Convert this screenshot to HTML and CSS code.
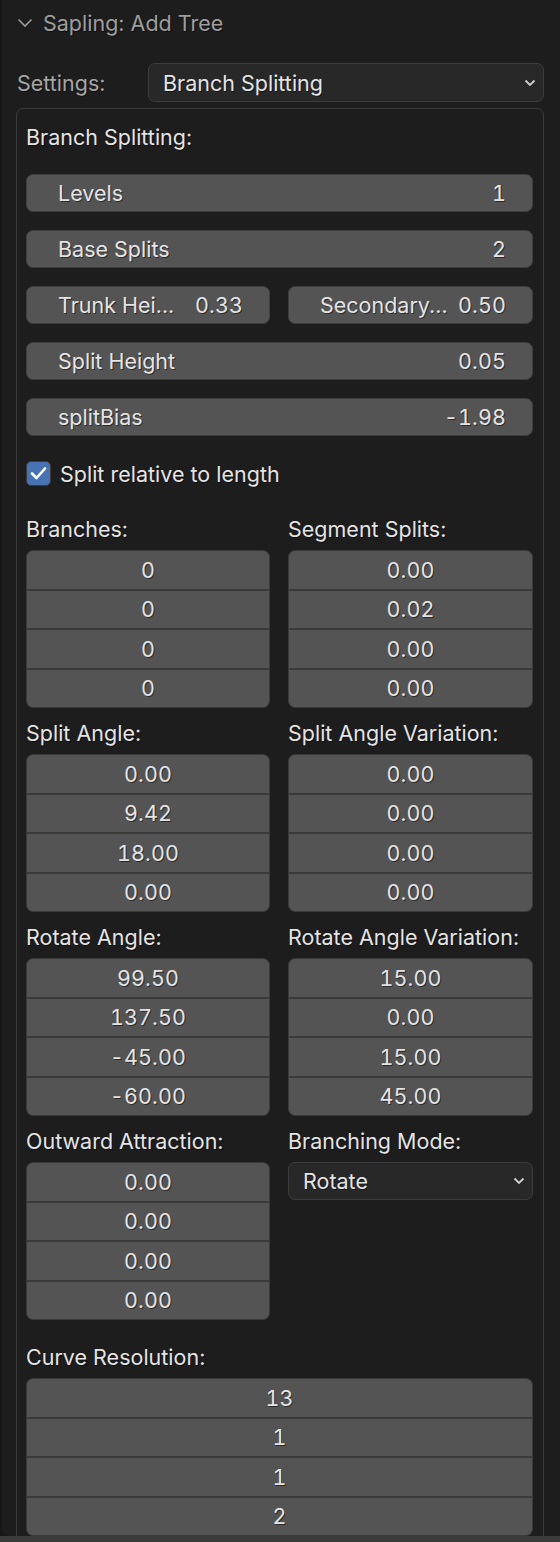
FILE: index.html
```html
<!DOCTYPE html>
<html>
<head>
<meta charset="utf-8">
<link rel="stylesheet" href="styles.css">
</head>
<body>
<div class="panel">
  <div class="header">
    <svg class="hchev" width="16" height="10" viewBox="0 0 16 10"><path d="M1.5 1.5 L8 8 L14.5 1.5" fill="none" stroke="#9a9a9a" stroke-width="1.6"/></svg>
    <span class="htitle">Sapling: Add Tree</span>
  </div>
  <div class="settings-row">
    <span class="settings-label">Settings:</span>
    <div class="dropdown wide">
      <span>Branch Splitting</span>
      <svg class="dchev" width="12" height="8" viewBox="0 0 12 8"><path d="M1.5 1.5 L6 6 L10.5 1.5" fill="none" stroke="#d0d0d0" stroke-width="1.8"/></svg>
    </div>
  </div>
  <div class="box">
    <div class="title">Branch Splitting:</div>
    <div class="field first"><span>Levels</span><span class="num">1</span></div>
    <div class="field"><span>Base Splits</span><span class="num">2</span></div>
    <div class="pair">
      <div class="field half"><span>Trunk Hei...</span><span class="num">0.33</span></div>
      <div class="field half"><span>Secondary...</span><span class="num">0.50</span></div>
    </div>
    <div class="field"><span>Split Height</span><span class="num">0.05</span></div>
    <div class="field"><span>splitBias</span><span class="num">-1.98</span></div>
    <div class="check-row">
      <div class="checkbox"><svg width="25" height="25" viewBox="0 0 25 25"><path d="M6 12.5 L10.5 17 L19 7.5" fill="none" stroke="#fff" stroke-width="2.6" stroke-linecap="round" stroke-linejoin="round"/></svg></div>
      <span>Split relative to length</span>
    </div>

    <div class="cols first-cols">
      <div class="col">
        <div class="label">Branches:</div>
        <div class="group"><div>0</div><div>0</div><div>0</div><div>0</div></div>
      </div>
      <div class="col">
        <div class="label">Segment Splits:</div>
        <div class="group"><div>0.00</div><div>0.02</div><div>0.00</div><div>0.00</div></div>
      </div>
    </div>
    <div class="cols">
      <div class="col">
        <div class="label">Split Angle:</div>
        <div class="group"><div>0.00</div><div>9.42</div><div>18.00</div><div>0.00</div></div>
      </div>
      <div class="col">
        <div class="label">Split Angle Variation:</div>
        <div class="group"><div>0.00</div><div>0.00</div><div>0.00</div><div>0.00</div></div>
      </div>
    </div>
    <div class="cols">
      <div class="col">
        <div class="label">Rotate Angle:</div>
        <div class="group"><div>99.50</div><div>137.50</div><div>-45.00</div><div>-60.00</div></div>
      </div>
      <div class="col">
        <div class="label">Rotate Angle Variation:</div>
        <div class="group"><div>15.00</div><div>0.00</div><div>15.00</div><div>45.00</div></div>
      </div>
    </div>
    <div class="cols">
      <div class="col">
        <div class="label">Outward Attraction:</div>
        <div class="group"><div>0.00</div><div>0.00</div><div>0.00</div><div>0.00</div></div>
      </div>
      <div class="col">
        <div class="label">Branching Mode:</div>
        <div class="dropdown mode">
          <span>Rotate</span>
          <svg class="dchev" width="12" height="8" viewBox="0 0 12 8"><path d="M1.5 1.5 L6 6 L10.5 1.5" fill="none" stroke="#d0d0d0" stroke-width="1.8"/></svg>
        </div>
      </div>
    </div>
    <div class="full-section">
      <div class="label">Curve Resolution:</div>
      <div class="group"><div>13</div><div>1</div><div>1</div><div>2</div></div>
    </div>
  </div>
</div>
<div class="ground"></div>
</body>
</html>
```
FILE: styles.css
```css
html, body {
  margin: 0;
  padding: 0;
}
body {
  background: #161616;
  width: 560px;
  height: 1542px;
  overflow: hidden;
  font-family: Inter, "Noto Sans", "DejaVu Sans", sans-serif;
  font-size: 21.5px;
  color: #e4e4e4;
}
.num, .group > div {
  font-variant-numeric: tabular-nums;
  letter-spacing: 0.1px;
}
.panel {
  margin-left: 2px;
  height: 1536px;
  background: #1d1d1d;
  border-bottom-left-radius: 8px;
  overflow: hidden;
}
.ground {
  height: 6px;
  background: #3b3b3b;
}
.header {
  height: 46px;
  display: flex;
  align-items: center;
}
.hchev {
  margin-left: 15px;
  margin-right: 10px;
}
.htitle {
  color: #9e9e9e;
  text-shadow: 1px 1px 0 rgba(0,0,0,0.5);
}
.settings-row {
  margin-top: 17px;
  display: flex;
  align-items: center;
  height: 39px;
}
.settings-label {
  width: 131px;
  padding-left: 15px;
  color: #a6a6a6;
  text-shadow: 1px 1px 0 rgba(0,0,0,0.5);
}
.dropdown {
  box-sizing: border-box;
  height: 39px;
  background: #282828;
  border: 1px solid #3c3c3c;
  border-radius: 7px;
  display: flex;
  align-items: center;
  justify-content: space-between;
  padding-left: 14px;
  padding-right: 7px;
  text-shadow: 1px 1px 0 rgba(0,0,0,0.5);
}
.dropdown.wide {
  width: 396px;
}
.dropdown.mode {
  height: 38px;
  margin-top: 4px;
}
.box {
  box-sizing: border-box;
  margin-top: 6px;
  margin-left: 14px;
  width: 528px;
  border: 1px solid #3a3a3a;
  border-radius: 7px;
  padding: 0 10px 0 9px;
  height: 1460px;
}
.title {
  margin-top: 16px;
  line-height: 24px;
  text-shadow: 1px 1px 0 rgba(0,0,0,0.5);
}
.field {
  box-sizing: border-box;
  height: 38px;
  margin-top: 18px;
  background: #545454;
  border: 1px solid #3e3e3e;
  border-radius: 7px;
  display: flex;
  align-items: center;
  justify-content: space-between;
  padding: 0 26px 0 31px;
  text-shadow: 1px 1px 0 rgba(0,0,0,0.5);
  white-space: nowrap;
}
.field.first {
  margin-top: 25px;
}
.pair {
  display: grid;
  grid-template-columns: 244px 245px;
  column-gap: 18px;
  margin-top: 18px;
}
.pair .field {
  margin-top: 0;
}
.check-row {
  margin-top: 25px;
  height: 25px;
  display: flex;
  align-items: center;
  text-shadow: 1px 1px 0 rgba(0,0,0,0.5);
}
.checkbox {
  box-sizing: border-box;
  width: 25px;
  height: 25px;
  background: #4772b3;
  border: 1px solid #3a3a3a;
  border-radius: 5px;
  margin-right: 9px;
  display: flex;
  align-items: center;
  justify-content: center;
}
.checkbox svg {
  flex: none;
}
.cols {
  display: grid;
  grid-template-columns: 244px 245px;
  column-gap: 18px;
  margin-top: 13px;
}
.cols.first-cols {
  margin-top: 31px;
}
.label {
  line-height: 24px;
  margin-bottom: 9px;
  text-shadow: 1px 1px 0 rgba(0,0,0,0.5);
  white-space: nowrap;
}
.group {
  box-sizing: border-box;
  height: 158px;
  display: grid;
  grid-template-rows: repeat(4, 1fr);
  row-gap: 2px;
  background: #3a3a3a;
  border: 1px solid #3a3a3a;
  border-radius: 7px;
  overflow: hidden;
}
.group > div {
  background: #545454;
  display: flex;
  align-items: center;
  justify-content: center;
  text-shadow: 1px 1px 0 rgba(0,0,0,0.5);
}
.full-section {
  margin-top: 25px;
}
```
